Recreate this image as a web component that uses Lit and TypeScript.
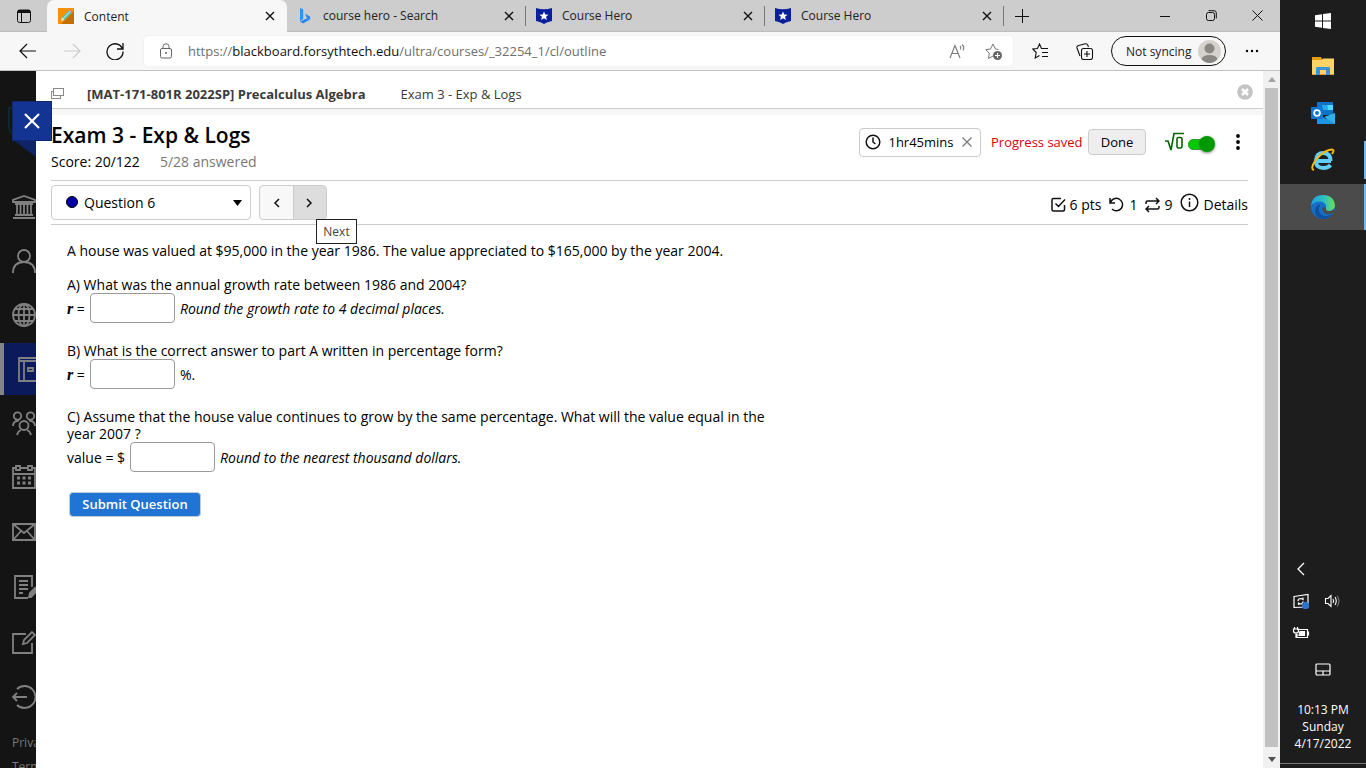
import { LitElement, html, css, svg } from "lit";
import { customElement } from "lit/decorators.js";

const star = "M0 -4.6 1.3 -1.6 4.5 -1.3 2.1 .8 2.8 4 0 2.3 -2.8 4 -2.1 .8 -4.5 -1.3 -1.3 -1.6Z";
const heroIcon = html`<svg class="fav" viewBox="0 0 16 16"><path d="M0 0Q8 2.4 16 0V13Q11 14 8 16 5 14 0 13Z" fill="#0a1f9c"/><path transform="translate(8 8)" d=${star} fill="#fff"/></svg>`;
const bingIcon = html`<svg class="fav" viewBox="0 0 16 16"><defs><linearGradient id="bing" x1="0" y1="0" x2="1" y2="1"><stop offset="0" stop-color="#2bb8f0"/><stop offset=".6" stop-color="#2a7ff0"/><stop offset="1" stop-color="#3bc9f3"/></linearGradient></defs><path d="M3 0 6.2 1.2V11L3 13.6Z" fill="#2d96f0"/><path d="M3 13.4 6 15.6 12.4 12Q14 10.500 13 8.500L8 5.600 9.300 9.100 10.600 9.900 3.500 13.500Z" fill="url(#bing)"/></svg>`;
const contentIcon = html`<svg class="fav" viewBox="0 0 16 16"><path d="M0 0H16V16H0Z" fill="#f4920b"/><path d="M16 3V16H3Z" fill="#c56e05"/><path d="M3 13 4 9.500 11.500 2 14 4.500 6.500 12Z" fill="#4cc5b4"/><path d="M4.800 10.800 12.500 3" stroke="#d7f5ee" stroke-width="1"/><path d="M3 13 4 9.500 6.500 12Z" fill="#fbe4b5"/><path d="M11 2.500 12 1.500 14.500 4 13.500 5Z" fill="#e77bb8"/></svg>`;
const closeIcon = html`<svg width="10" height="10" viewBox="0 0 10 10"><path d="M1 1 9 9M9 1 1 9" stroke="#111" stroke-width="1.400" fill="none"/></svg>`;

const railIcons = [
  svg`<path d="M1 7V5L12 1 23 5V7ZM3 9H21M5 9V19M8.500 9V19M12 9V19M15.500 9V19M19 9V19M3 20H21M1 23H23"/>`,
  svg`<circle cx="12" cy="7" r="6"/><path d="M1 24Q1 13 12 13T23 24"/>`,
  svg`<circle cx="12" cy="12" r="11"/><ellipse cx="12" cy="12" rx="5.500" ry="11"/><path d="M12 1V23M1 12H23M3 6H21M3 18H21"/>`,
  svg`<path d="M7 1H30V24H7ZM7 4H30M12 4V24M16 11H21V14H16Z"/>`,
  svg`<circle cx="5.500" cy="5" r="3.700"/><circle cx="18.500" cy="5" r="3.700"/><path d="M1 15Q1 10 7 9.500M23 15Q23 10 17 9.500"/><circle cx="12" cy="14.500" r="4.500"/><path d="M5 24Q6 20 9 19M19 24Q18 20 15 19"/>`,
  svg`<path d="M1 3H23V23H1ZM1 9H23"/><path d="M4 1H8V5H4ZM16 1H20V5H16Z" fill="#141414"/><path d="M5 13H8M10.500 13H13.500M16 13H19M5 18H8M10.500 18H13.500M16 18H19" stroke-width="3"/>`,
  svg`<path d="M1 4H23V20H1ZM1 4 12 13 23 4M1 20 9 11M23 20 15 11"/>`,
  svg`<path d="M20 12V1H3V23H16M7 6H16M7 10H16M7 14H16M7 18H11"/><path d="M17 22 18 18 23 13 24 17 19 22Z" fill="#808080"/>`,
  svg`<path d="M14 4H1V23H20V13"/><path d="M11 14 12 10 20 2 23 5 15 13Z"/>`,
  svg`<path d="M5 4A11 11 0 1 1 5 20M1 12H15M5 8 1 12 5 16"/>`,
];

@customElement("app-root")
export class AppRoot extends LitElement {
  static styles = css`
    :host { display: block; --ui: "Open Sans", "Noto Sans", sans-serif; --body: "Open Sans", sans-serif; }
    * { box-sizing: border-box; }
    svg { display: block; flex: none; }
    button { font: inherit; color: inherit; background: none; border: 0; padding: 0; margin: 0; }
    h1, p { margin: 0; }
    a { color: inherit; text-decoration: none; }
    .desk { display: flex; height: 100vh; overflow: hidden; background: #1d1d1d; }
    .window { flex: 1; min-width: 0; display: flex; flex-direction: column; background: #fff; font-family: var(--ui); font-size: 12px; color: #222; }

    .tabs { display: flex; height: 32px; background: #cdcdcd; align-items: stretch; border-bottom: 1px solid #bcbcbc; }
    .menu { width: 47px; display: grid; place-items: center; }
    .tab { flex: 0 1 239px; min-width: 0; display: flex; align-items: center; gap: 10px; padding: 0 12px 0 10px; position: relative; }
    .tab.active { flex-basis: 240px; padding-left: 11px; background: #f7f7f7; border-radius: 7px 7px 0 0; margin-bottom: -1px; }
    .tab.rule::after { content: ""; position: absolute; right: 0; top: 6px; height: 20px; width: 1px; background: #777; }
    .fav { width: 16px; height: 16px; }
    .tab-name { flex: 1; overflow: hidden; white-space: nowrap; }
    .plus { width: 36px; display: grid; place-items: center; }
    .controls { margin-left: auto; display: flex; }
    .controls button { width: 46px; display: grid; place-items: center; }

    .toolbar { display: flex; align-items: center; height: 39px; flex: none; background: #f7f7f7; border-bottom: 1px solid #c2c2c2; padding: 0 14px 0 18px; }
    .nav { display: flex; gap: 24px; width: 126px; }
    .address { flex: 1; min-width: 0; height: 30px; background: #fff; border-radius: 4px; display: flex; align-items: center; padding: 0 10px 0 14px; color: #6f6f6f; font-size: 13px; box-shadow: 0 0 2px #e4e4e4; }
    .url { flex: 1; margin-left: 14px; min-width: 0; overflow: hidden; white-space: nowrap; }
    .url b { font-weight: 400; color: #111; }
    .extras { display: flex; align-items: center; gap: 18px; }
    .tools { display: flex; align-items: center; gap: 26px; padding: 0 17px 0 19px; }
    .profile { display: flex; align-items: center; justify-content: space-between; width: 115px; height: 30px; border: 1px solid #111; border-radius: 15px; padding: 0 4px 0 14px; white-space: nowrap; }
    .more { width: 28px; margin-left: 12px; display: grid; place-items: center; }

    .body { flex: 1; min-height: 0; display: flex; position: relative; }
    .rail { width: 36px; flex: none; overflow: hidden; background: #141414; display: flex; flex-direction: column; color: #777; }
    .rail-logo { height: 109px; flex: none; padding: 32px 0 0 8px; }
    .rail-item { height: 54px; flex: none; display: flex; align-items: center; padding-left: 12px; }
    .rail-item.tall { height: 55px; }
    .rail-item svg { overflow: visible; }
    .rail-item.on { background: #0b1a5a; border-left: 4px solid #858585; padding-left: 8px; height: 52px; margin: 1px 0; }
    .rail-links { padding: 7px 0 0 12px; line-height: 24px; white-space: nowrap; }
    .rail-links a { display: block; }
    .dismiss { position: absolute; left: 12px; top: 30px; width: 40px; height: 40px; background: #143494; border: 1px solid #0f2670; display: grid; place-items: center; }

    .page { flex: 1; min-width: 0; padding-left: 15px; font-family: var(--body); font-size: 14px; color: #000; }
    .crumbs { display: flex; align-items: center; height: 38px; padding: 8px 10px 0 0; border-bottom: 1px solid #ccc; color: #3a3a3a; font-family: var(--ui); font-size: 13px; }
    .crumbs strong { margin: 0 35px 0 23px; }
    .crumbs .shut { margin: -4px 0 0 auto; }
    .strip { height: 6px; background: #f7f7f7; }
    .inner { padding-right: 15px; }
    .head { height: 66px; display: flex; justify-content: space-between; border-bottom: 1px solid #ccc; padding-top: 6px; }
    h1 { font-size: 21px; line-height: 28px; font-weight: 600; }
    .score { display: flex; gap: 20px; line-height: 22px; margin-top: 2px; }
    .muted { color: #777; }
    .actions { display: flex; align-items: center; height: 42px; font-size: 13px; }
    .timer { display: flex; align-items: center; height: 29px; width: 122px; padding: 0 7px 0 5px; justify-content: space-between; border: 1px solid #ccc; border-radius: 4px; margin-right: 10px; }
    .saved { color: #d8000c; width: 97px; white-space: nowrap; }
    .done { width: 58px; height: 26px; background: #eee; border: 1px solid #ccc; border-radius: 4px; margin-right: 19px; }
    .preview { display: flex; align-items: center; gap: 4px; }
    .switch { appearance: none; margin: 3px 0 0; width: 28px; height: 18px; position: relative; }
    .switch::before { content: ""; position: absolute; left: 0; top: 4px; width: 24px; height: 9px; border-radius: 5px; background: #0c0; border: 1px solid #393; }
    .switch::after { content: ""; position: absolute; right: 1px; top: 1px; width: 16px; height: 16px; border-radius: 50%; background: #090; box-shadow: 0 1px 3px #777; }
    .dots { width: 20px; margin-left: 12px; display: grid; place-items: center; }

    .qbar { height: 44px; display: flex; align-items: center; justify-content: space-between; border-bottom: 1px solid #ccc; }
    .pick { display: flex; gap: 8px; }
    .choose { position: relative; width: 200px; }
    .choose select { appearance: none; width: 100%; height: 35px; font: inherit; color: #000; background: #fff; border: 1px solid #ccc; border-radius: 4px; padding: 0 24px 0 32px; }
    .bullet { position: absolute; left: 15px; top: 11px; }
    .caret { position: absolute; right: 9px; top: 15px; }
    .pair { display: flex; position: relative; border: 1px solid #ccc; border-radius: 4px; height: 35px; width: 68px; background: #f8f8f8; }
    .pair button { flex: 1; display: grid; place-items: center; }
    .pair .next { background: #ddd; border-left: 1px solid #ccc; }
    .tip { position: absolute; left: 56px; top: 33px; width: 41px; height: 25px; border: 1px solid #222; background: #fff; color: #444; font: 12px/23px var(--ui); text-align: center; z-index: 1; }
    .facts { display: flex; align-items: center; gap: 8px; padding-top: 4px; }
    .facts span, .facts button { display: flex; align-items: center; gap: 4px; white-space: nowrap; }

    .question { padding: 17px 0 0 16px; line-height: 17px; max-width: 730px; }
    .part { margin-top: 19px; }
    .part.first { margin-top: 17px; }
    .answer { display: flex; align-items: center; gap: 5px; height: 30px; }
    .answer input { width: 85px; height: 30px; border: 1px solid #999; border-radius: 4px; padding: 4px; font: inherit; }
    .var { font: italic bold 16px/17px "Liberation Serif", serif; }
    .submit { display: block; margin: 20px 0 0 2px; height: 25px; width: 132px; background: #1f74d4; border: 1px solid #bcd; border-radius: 4px; color: #fff; font-size: 13px; font-weight: 600; }

    .scroll { width: 17px; flex: none; background: #f1f1f1; display: flex; flex-direction: column; align-items: center; }
    .arrow { height: 17px; display: grid; place-items: center; flex: none; }
    .thumb { width: 13px; flex: 1; background: #c1c1c1; margin-bottom: 4px; }

    .taskbar { width: 86px; flex: none; background: #1d1d1d; color: #fff; font: 12px/17px var(--ui); display: flex; flex-direction: column; }
    .app { height: 47px; width: 86px; flex: none; display: grid; place-items: center; }
    .app.first { height: 42px; }
    .app.running { border-right: 2px solid #76b9ed; padding-left: 2px; height: 38px; margin: 5px 0; }
    .app.current { background: #4b4b4b; height: 46px; margin: 0; }
    .tray { margin-top: auto; padding: 0 12px; display: grid; grid-template-columns: 18px 18px; column-gap: 13px; row-gap: 16px; align-items: center; }
    .pad { display: grid; place-items: center; height: 24px; margin: 16px 0 20px; }
    .clock { text-align: center; padding-bottom: 11px; border-bottom: 1px solid #777; margin-bottom: 4px; }
  `;

  private tab(icon: unknown, name: string, cls = "") {
    return html`<div class="tab ${cls}">${icon}<span class="tab-name">${name}</span><button aria-label="Close tab">${closeIcon}</button></div>`;
  }

  render() {
    return html`<div class="desk">
      <div class="window">
        <div class="tabs">
          <button class="menu" aria-label="Tab actions"><svg width="16" height="16" viewBox="0 0 16 16" fill="none" stroke="#111"><rect x="1.500" y="2" width="13" height="12.500" rx="2"/><path d="M2 3.500H14" stroke-width="3"/><path d="M5.500 4V14"/></svg></button>
          ${this.tab(contentIcon, "Content", "active")}
          ${this.tab(bingIcon, "course hero - Search", "rule")}
          ${this.tab(heroIcon, "Course Hero", "rule")}
          ${this.tab(heroIcon, "Course Hero", "rule")}
          <button class="plus" aria-label="New tab"><svg width="14" height="14" viewBox="0 0 14 14"><path d="M7.500 0V14M0 7.500H14" stroke="#111"/></svg></button>
          <div class="controls">
            <button aria-label="Minimize"><svg width="10" height="10"><path d="M0 5.500H10" stroke="#111"/></svg></button>
            <button aria-label="Restore"><svg width="11" height="11" fill="none" stroke="#111"><rect x=".5" y="2.500" width="8" height="8" rx="2"/><path d="M2.500 .7H8Q10.300 .7 10.300 3V8.500"/></svg></button>
            <button aria-label="Close"><svg width="11" height="11"><path d="M.5 .5 10.500 10.500M10.500 .5 .5 10.500" stroke="#111"/></svg></button>
          </div>
        </div>
        <div class="toolbar">
          <div class="nav">
            <button aria-label="Back"><svg width="18" height="16" fill="none" stroke="#111" stroke-width="1.200"><path d="M18 8H2M9 1 2 8 9 15"/></svg></button>
            <button aria-label="Forward" disabled><svg width="22" height="16" fill="none" stroke="#ccc" stroke-width="1.200"><path d="M4 8H20M13 1 20 8 13 15"/></svg></button>
            <button aria-label="Refresh"><svg width="18" height="18" fill="none" stroke="#111" stroke-width="1.300"><path d="M16.500 7A8 8 0 1 0 17 9.500M17 1V7H11"/></svg></button>
          </div>
          <div class="address">
            <svg width="16" height="16" fill="none" stroke="#666"><rect x="2.500" y="5.500" width="11" height="9.500" rx="1.500"/><path d="M5 5.500V3.500Q5 .8 8 .8T11 3.500V5.500"/><circle cx="8" cy="10" r=".6" fill="#666"/></svg>
            <span class="url">https://<b>blackboard.forsythtech.edu</b>/ultra/courses/_32254_1/cl/outline</span>
            <div class="extras">
              <svg width="18" height="16" fill="none" stroke="#777" stroke-width="1.100"><path d="M1 15 6 2.500 11 15M3 10.500H9M11 3Q12.500 4.500 11.500 6.500M13 1.500Q16 4 14 7.500"/></svg>
              <svg width="18" height="17" fill="none" stroke="#777"><path d="M13.500 6.500 10.500 6 8 1 5.500 6 .8 6.700 4.300 10.300 3.500 15.500 8 13"/><circle cx="12.500" cy="12.500" r="4.500" fill="#666" stroke="none"/><path d="M12.500 10V15M10 12.500H15" stroke="#fff"/></svg>
            </div>
          </div>
          <div class="tools">
            <svg width="18" height="17" fill="none" stroke="#111" stroke-width="1.100"><path d="M16 5.500H9.500L7.500 1 5.500 5.500 .8 6 4.200 9.500 3.200 15 7.500 12.500M10 9.500H16M10 13.500H16"/></svg>
            <svg width="18" height="17" fill="none" stroke="#111" stroke-width="1.100"><rect x="5.500" y="5.500" width="11" height="11" rx="2"/><path d="M11 8V14M8 11H14M4 13 1 5Q.5 3 2.500 2.500L9.500 .8Q11 .5 11.700 2L12.500 4"/></svg>
          </div>
          <button class="profile">Not syncing<svg width="23" height="23" viewBox="0 0 23 23"><circle cx="11.500" cy="11.500" r="11.500" fill="#d5d2ce"/><circle cx="11.500" cy="8.500" r="5" fill="#8a8684"/><path d="M3.500 19Q5 15 11.500 15T19.500 19Q16 23 11.500 23T3.500 19Z" fill="#8a8684"/></svg></button>
          <button class="more" aria-label="Settings and more"><svg width="14" height="4"><circle cx="2" cy="2" r="1.200"/><circle cx="7" cy="2" r="1.200"/><circle cx="12" cy="2" r="1.200"/></svg></button>
        </div>
        <div class="body">
          <nav class="rail">
            <div class="rail-logo"><svg width="56" height="74" viewBox="0 0 56 74"><path d="M6 5H1V24Q2 31 7 33" fill="none" stroke="#0a3038" stroke-width="1.500"/><path d="M4 36H52L28 54Z" fill="#0e2466"/></svg></div>
            ${railIcons.map((icon, i) => html`<a class="rail-item ${i === 3 ? "on" : i > 5 ? "tall" : ""}" href="#" aria-label="Section ${i + 1}"><svg width="24" height="24" viewBox="0 0 24 24" fill="none" stroke="#808080" stroke-width="1.800">${icon}</svg></a>`)}
            <div class="rail-links"><a href="#">Privacy</a><a href="#">Terms</a></div>
          </nav>
          <main class="page">
            <div class="crumbs">
              <svg width="13" height="11" fill="#fff" stroke="#888"><rect x=".5" y="3.500" width="9" height="7"/><rect x="2.500" y=".5" width="10" height="7"/></svg>
              <strong>[MAT-171-801R 2022SP] Precalculus Algebra</strong><span>Exam 3 - Exp &amp; Logs</span>
              <button class="shut" aria-label="Close"><svg width="16" height="16"><circle cx="8" cy="8" r="7.800" fill="#c3c3c3"/><path d="M5 5 11 11M11 5 5 11" stroke="#fff" stroke-width="2.600"/></svg></button>
            </div>
            <div class="strip"></div>
            <div class="inner">
              <div class="head">
                <div><h1>Exam 3 - Exp &amp; Logs</h1><div class="score"><span>Score: 20/122</span><span class="muted">5/28 answered</span></div></div>
                <div class="actions">
                  <div class="timer"><svg width="16" height="16" fill="none" stroke="#111" stroke-width="1.500"><circle cx="8" cy="8" r="6.800"/><path d="M8 3.500V8L10.500 10"/></svg><span>1hr45mins</span><button aria-label="Hide timer"><svg width="12" height="12"><path d="M1.500 1.500 10.500 10.500M10.500 1.500 1.500 10.500" stroke="#777" stroke-width="1.200"/></svg></button></div>
                  <span class="saved">Progress saved</span><button class="done">Done</button>
                  <label class="preview"><svg width="19" height="20" fill="none" stroke="#060" stroke-width="1.600"><path d="M0 9H3L6 18 9 1.500H19"/><rect x="12" y="5.500" width="5" height="10.500" rx="1.500"/></svg><input class="switch" type="checkbox" checked aria-label="Equation preview"></label>
                  <button class="dots" aria-label="More"><svg width="4" height="18"><circle cx="2" cy="3" r="1.900"/><circle cx="2" cy="9" r="1.900"/><circle cx="2" cy="15" r="1.900"/></svg></button>
                </div>
              </div>
              <div class="qbar">
                <div class="pick">
                  <div class="choose"><select aria-label="Question"><option>Question 6</option></select><svg class="bullet" width="12" height="12"><circle cx="6" cy="6" r="5.500" fill="#0000a8" stroke="#000"/></svg><svg class="caret" width="9" height="6"><path d="M0 0H9L4.500 6Z"/></svg></div>
                  <div class="pair"><button aria-label="Previous"><svg width="7" height="10" fill="none" stroke="#111" stroke-width="1.500"><path d="M6 1 2 5 6 9"/></svg></button><button class="next" aria-label="Next"><svg width="7" height="10" fill="none" stroke="#111" stroke-width="1.500"><path d="M1 1 5 5 1 9"/></svg></button><div class="tip" role="tooltip">Next</div></div>
                </div>
                <div class="facts">
                  <span><svg width="15" height="15" fill="none" stroke="#111" stroke-width="1.500"><path d="M10 1.500H2.500Q1 1.500 1 3V12.500Q1 14 2.500 14H12Q13.500 14 13.500 12.500V8M4.500 6.500 7.500 9.500 14 2.500"/></svg>6 pts</span>
                  <span><svg width="16" height="15" fill="none" stroke="#111" stroke-width="1.500"><path d="M1 1V6H6M1.500 5.500A6.200 6.200 0 1 1 3 12"/></svg>1</span>
                  <span><svg width="15" height="16" fill="none" stroke="#111" stroke-width="1.500"><path d="M1 7V5.500Q1 4 2.500 4H13.500M11 1 14 4 11 7M14 9V10.500Q14 12 12.500 12H1.500M4 9 1 12 4 15"/></svg>9</span>
                  <button><svg width="19" height="24" fill="none" stroke="#111" stroke-width="1.500"><circle cx="9.500" cy="9.500" r="8.300"/><path d="M9.500 8.500V14M9.500 5V7"/></svg>Details</button>
                </div>
              </div>
              <div class="question">
                <p>A house was valued at $95,000 in the year 1986. The value appreciated to $165,000 by the year 2004.</p>
                <div class="part first"><p>A) What was the annual growth rate between 1986 and 2004?</p>
                  <div class="answer"><label for="a"><span class="var">r</span> =</label><input id="a"><em>Round the growth rate to 4 decimal places.</em></div></div>
                <div class="part"><p>B) What is the correct answer to part A written in percentage form?</p>
                  <div class="answer"><label for="b"><span class="var">r</span> =</label><input id="b"><span>%.</span></div></div>
                <div class="part"><p>C) Assume that the house value continues to grow by the same percentage. What will the value equal in the year 2007 ?</p>
                  <div class="answer"><label for="c">value = $</label><input id="c"><em>Round to the nearest thousand dollars.</em></div></div>
                <button class="submit">Submit Question</button>
              </div>
            </div>
          </main>
          <div class="scroll"><div class="arrow"><svg width="8" height="5"><path d="M0 5H8L4 0Z" fill="#a3a3a3"/></svg></div><div class="thumb"></div><div class="arrow"><svg width="8" height="5"><path d="M0 0H8L4 5Z" fill="#505050"/></svg></div></div>
          <button class="dismiss" aria-label="Close panel"><svg width="16" height="16"><path d="M1 1 15 15M15 1 1 15" stroke="#fff" stroke-width="2.200"/></svg></button>
        </div>
      </div>
      <aside class="taskbar">
        <button class="app first" aria-label="Start"><svg width="16" height="16" fill="#fff"><path d="M0 2.200 7 1.200V7.500H0ZM8 1 16 0V7.500H8ZM0 8.500H7V14.800L0 13.800ZM8 8.500H16V16L8 15Z"/></svg></button>
        <button class="app" aria-label="File Explorer"><svg width="22" height="18"><path d="M0 0H9L10 2H22V18H0Z" fill="#e59c10"/><path d="M0 3H10L11 1.500H22V17H0Z" fill="#fdd367"/><path d="M4 18V11Q4 10 5 10H17Q18 10 18 11V18H14V13H8V18Z" fill="#3a93d8"/></svg></button>
        <button class="app" aria-label="Outlook"><svg width="24" height="22"><path d="M6 0H22V13H6Z" fill="#1173c6"/><path d="M11 3H16.500V8H11Z" fill="#28a8ea"/><path d="M16.500 3H22V8H16.500Z" fill="#50d9ff"/><path d="M6 11 15 17 24 11V22H6Z" fill="#1d94e4"/><path d="M24 11V22L13 15Z" fill="#35aeea"/><rect y="5" width="12" height="12" rx="1" fill="#0f78d4"/><circle cx="6" cy="11" r="2.900" fill="none" stroke="#fff" stroke-width="1.800"/></svg></button>
        <button class="app running" aria-label="Internet Explorer"><svg width="24" height="24" fill="none"><path d="M5 13H20M19.500 13Q19.500 5 12.500 5T5 12.500 12.500 20Q17 20 19.500 17" stroke="#62cdf6" stroke-width="4"/><path d="M3 22Q-1 21 4 13 11 4 18 2T21 6" stroke="#efb919" stroke-width="2"/></svg></button>
        <button class="app running current" aria-label="Microsoft Edge"><svg width="24" height="24"><defs><linearGradient id="edge"><stop offset="0" stop-color="#1ca0e2"/><stop offset=".6" stop-color="#32c4b9"/><stop offset="1" stop-color="#6de04f"/></linearGradient></defs><circle cx="12" cy="12" r="12" fill="#176fc4"/><path d="M0 11Q1 0 12 0T24 11Q23 16 17 16 13 16 15 13 16 8 10 6.500 3 6 0 11Z" fill="url(#edge)"/><path d="M8 13Q7 19 13 21 18 22 22 18 18 24 12 24 5 23 4 17 4 11 9 9Z" fill="#0f4f9f"/><path d="M15 13Q14 16 18 16 22 16 23 14V17Q20 20 15 19 10 17 12 12Z" fill="#4b4b4b"/></svg></button>
        <div class="tray">
          <svg width="18" height="16" fill="none" stroke="#fff" stroke-width="1.300"><path d="M12 2 6 8 12 14"/></svg><span></span>
          <svg width="18" height="16" fill="none" stroke="#fff" stroke-width="1.200"><path d="M2 3.500 16 1.500V14L2 14.500ZM6 8Q6 5.500 9 5.500L11 6.500V4.500M11 8.500Q11 11 8 11L6.500 10V12"/><circle cx="13.500" cy="12.500" r="3.700" fill="#2c73c9" stroke="none"/></svg>
          <svg width="18" height="16" fill="none" stroke="#fff" stroke-width="1.100"><path d="M2.500 5.500H5L8 2.500V13.500L5 10.500H2.500ZM10 6Q11.200 8 10 10M12 4Q14.500 8 12 12"/><path d="M14 2.500Q18 8 14 13.500" stroke="#777"/></svg>
          <svg width="18" height="16" fill="none" stroke="#fff" stroke-width="1.200"><path d="M5 4.500H15.500V12.500H5V9M16.500 6.500V10.500M2.500 2V4M5.500 2V4M1.500 4H6.500V6Q6.500 8 4 8T1.500 6ZM4 8V12.500H5"/><path d="M8 6.500H12.500V10.500H7Z" fill="#fff"/></svg>
        </div>
        <div class="pad"><svg width="16" height="13" fill="none" stroke="#fff" stroke-width="1.200"><rect x="1" y="1" width="14" height="11" rx="1"/><path d="M1 8H15M8 8V12"/></svg></div>
        <div class="clock">10:13 PM<br>Sunday<br>4/17/2022</div>
      </aside>
    </div>`;
  }
}
